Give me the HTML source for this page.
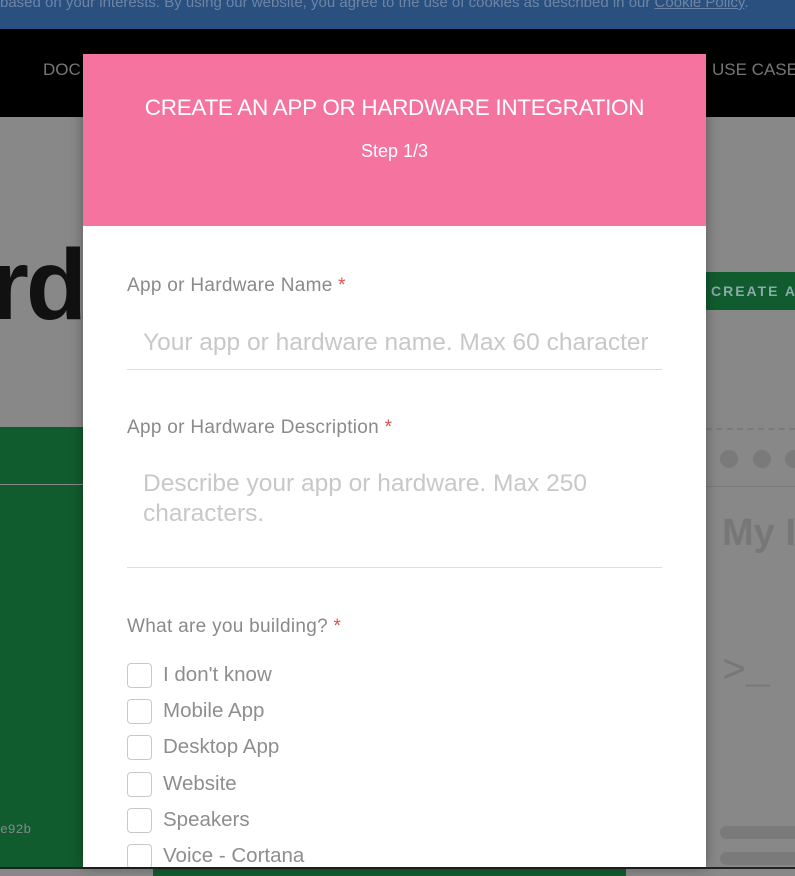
<!DOCTYPE html>
<html><head><style>
*{margin:0;padding:0;box-sizing:border-box}
body{width:795px;height:876px;overflow:hidden;position:relative;background:#888;font-family:"Liberation Sans",sans-serif}
.abs{position:absolute}
.lbl{position:absolute;left:44px;font-size:19px;color:#8a8a8a;letter-spacing:0.3px;white-space:nowrap}
.lbl b{color:#d9534f;font-weight:normal}
.ph{position:absolute;left:60px;font-size:24.5px;color:#c8c8c8;white-space:nowrap}
.line{position:absolute;left:44px;width:535px;height:1px;background:#ddd}
.cb{position:absolute;left:44px;width:25px;height:25px;border:1px solid #c9c9c9;border-radius:4px}
.ct{position:absolute;left:80px;font-size:20.5px;color:#8e8e8e;white-space:nowrap}
</style></head><body>
<div class="abs" style="left:0;top:0;width:795px;height:29px;background:#2a5080;color:#6f84a3;font-size:15px;line-height:6px;white-space:nowrap;overflow:hidden">based on your interests. By using our website, you agree to the use of cookies as described in our <u>Cookie Policy</u>.</div>
<div class="abs" style="left:0;top:29px;width:795px;height:88px;background:#000"></div>
<div class="abs" style="left:43px;top:60px;color:#777;font-size:17px">DOC</div>
<div class="abs" style="left:712px;top:60px;color:#777;font-size:17px;white-space:nowrap">USE CASES</div>
<div class="abs" style="left:-10px;top:228px;color:#111;font-size:100px;font-weight:bold;letter-spacing:-3px">rd</div>
<div class="abs" style="left:0;top:427px;width:83px;height:440px;background:#115c2e"></div>
<div class="abs" style="left:0;top:484px;width:83px;height:1px;background:#888"></div>
<div class="abs" style="left:0;top:822px;color:#888;font-family:'Liberation Mono',monospace;font-size:13px">e92b</div>
<div class="abs" style="left:706px;top:272px;width:89px;height:38px;background:#115c2e;color:#8aa;font-size:14px;font-weight:bold;letter-spacing:2px;padding:11px 0 0 5px;white-space:nowrap;overflow:hidden">CREATE A</div>
<div class="abs" style="left:706px;top:428px;width:89px;height:0;border-top:2px dashed #7a7a7a"></div>
<div class="abs" style="left:720px;top:450px;width:18px;height:18px;border-radius:50%;background:#7a7a7a"></div>
<div class="abs" style="left:753px;top:450px;width:18px;height:18px;border-radius:50%;background:#7a7a7a"></div>
<div class="abs" style="left:785px;top:450px;width:18px;height:18px;border-radius:50%;background:#7a7a7a"></div>
<div class="abs" style="left:706px;top:486px;width:89px;height:1px;background:#7a7a7a"></div>
<div class="abs" style="left:722px;top:512px;color:#777;font-size:38px;font-weight:bold;white-space:nowrap">My I</div>
<div class="abs" style="left:722px;top:650px;color:#777;font-size:40px;font-family:'Liberation Mono',monospace">&gt;_</div>
<div class="abs" style="left:720px;top:826px;width:80px;height:13px;border-radius:7px;background:#7a7a7a"></div>
<div class="abs" style="left:720px;top:852px;width:80px;height:13px;border-radius:7px;background:#7a7a7a"></div>
<div class="abs" style="left:0;top:867px;width:795px;height:9px;background:#888;border-top:2px solid #222"></div>
<div class="abs" style="left:153px;top:869px;width:473px;height:7px;background:#115c2e"></div>
<div class="abs" style="left:83px;top:54px;width:623px;height:813px;background:#fff;box-shadow:0 0 12px rgba(0,0,0,.35);overflow:hidden">
 <div style="height:172px;background:#f4739f;color:#fff;text-align:center">
  <div style="padding-top:41px;font-size:22.5px;letter-spacing:-0.3px;white-space:nowrap">CREATE AN APP OR HARDWARE INTEGRATION</div>
  <div style="margin-top:20px;font-size:18px">Step 1/3</div>
 </div>
 <div class="lbl" style="top:221px">App or Hardware Name <b>*</b></div>
 <div class="ph" style="top:275px;width:505px;overflow:hidden">Your app or hardware name. Max 60 characters</div>
 <div class="line" style="top:315px"></div>
 <div class="lbl" style="top:363px">App or Hardware Description <b>*</b></div>
 <div class="ph" style="top:415px;line-height:30px">Describe your app or hardware. Max 250<br>characters.</div>
 <div class="line" style="top:513px"></div>
 <div class="lbl" style="top:562px">What are you building? <b>*</b></div>
 <div class="cb" style="top:609px"></div><div class="ct" style="top:609px">I don't know</div>
 <div class="cb" style="top:645px"></div><div class="ct" style="top:645px">Mobile App</div>
 <div class="cb" style="top:681px"></div><div class="ct" style="top:681px">Desktop App</div>
 <div class="cb" style="top:718px"></div><div class="ct" style="top:718px">Website</div>
 <div class="cb" style="top:754px"></div><div class="ct" style="top:754px">Speakers</div>
 <div class="cb" style="top:790px"></div><div class="ct" style="top:790px">Voice - Cortana</div>
</div>
</body></html>
